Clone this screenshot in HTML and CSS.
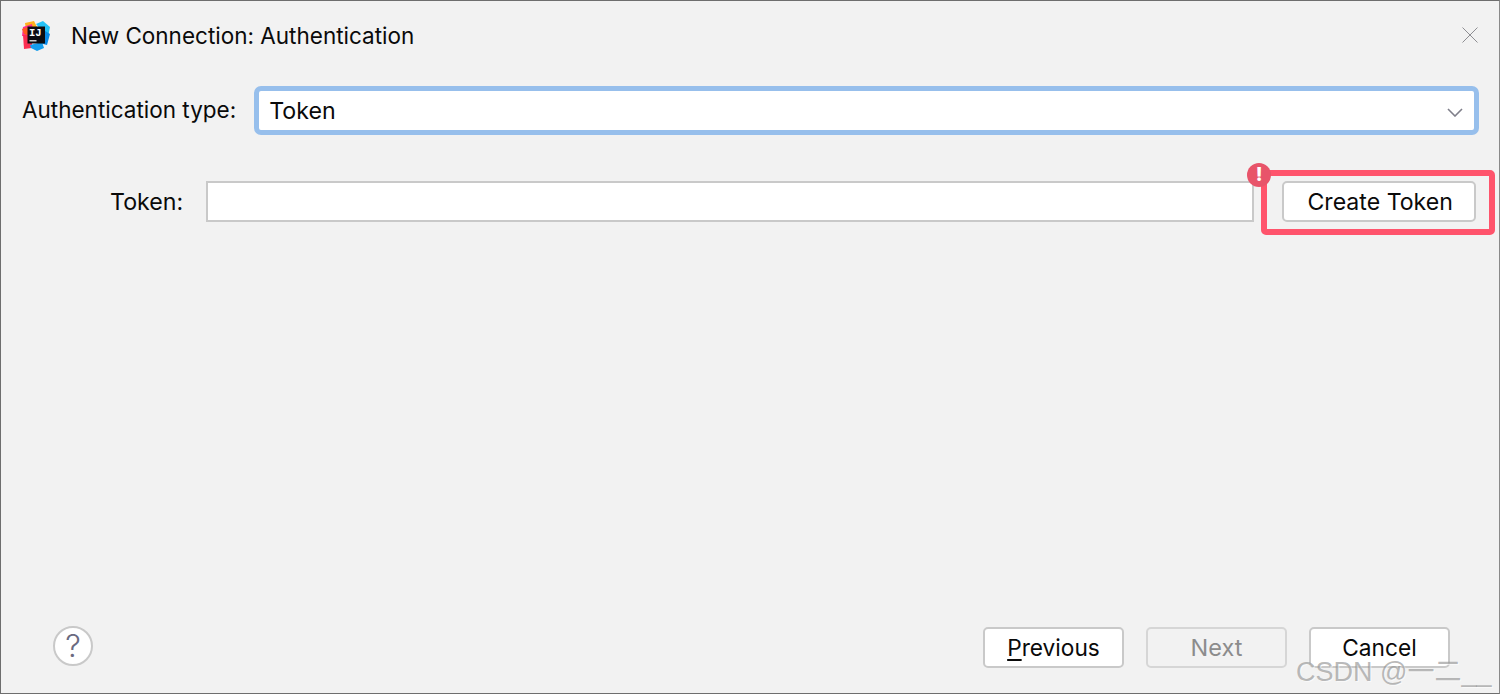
FILE: index.html
```html
<!DOCTYPE html>
<html lang="en">
<head>
<meta charset="utf-8">
<title>New Connection: Authentication</title>
<link rel="stylesheet" href="styles.css">
</head>
<body>
<div class="dialog">
  <header class="titlebar">
    <svg class="logo" viewBox="0 0 28 30" width="28" height="30">
      <polygon points="3,2 12,0 15,6 4,9" fill="#ffb21e"/>
      <polygon points="1,6 10,3 12,16 0,15" fill="#ff2f8e"/>
      <polygon points="0,8 6,6 7,15 2,13" fill="#ff5a1f"/>
      <polygon points="1,14 10,14 10,27 2,28" fill="#fb2e52"/>
      <polygon points="14,3 21,0 28,6 26,16 20,10" fill="#23c2f7"/>
      <polygon points="20,8 28,13 25,24 17,22" fill="#0a8be8"/>
      <polygon points="8,24 20,21 22,27 15,30 9,27" fill="#159dec"/>
      <rect x="5.500" y="5.500" width="17.500" height="17" fill="#0c0c10"/>
      <text x="7" y="14.500" class="logo-text">IJ</text>
      <rect x="7.500" y="19" width="7" height="1.500" fill="#c9c9c9"/>
    </svg>
    <h1 class="title">New Connection: Authentication</h1>
    <svg class="close" viewBox="0 0 16 16" width="16" height="16">
      <path d="M0.500 0.500 15.500 15.500M15.500 0.500 0.500 15.500" stroke="#8e8e92" stroke-width="1" fill="none"/>
    </svg>
  </header>

  <div class="auth-row">
    <label class="label">Authentication type:</label>
    <div class="select">
      <span>Token</span>
      <svg class="chevron" viewBox="0 0 16 9" width="16" height="9">
        <path d="M1 1 8 8 15 1" stroke="#7f7f8a" stroke-width="1.600" fill="none"/>
      </svg>
    </div>
  </div>

  <div class="token-row">
    <label class="label-token">Token:</label>
    <div class="input-wrap">
      <div class="input"></div>
      <span class="badge">!</span>
    </div>
    <div class="highlight-wrap">
      <button class="btn btn-create">Create Token</button>
      <span class="highlight"></span>
    </div>
  </div>

  <footer class="footer">
    <div class="help">?</div>
    <div class="actions">
      <button class="btn"><span class="mnemonic">P</span>revious</button>
      <button class="btn btn-disabled">Next</button>
      <button class="btn">Cancel</button>
    </div>
  </footer>
  <div class="watermark">CSDN @一二__</div>
</div>
</body>
</html>
```
FILE: styles.css
```css
* { box-sizing: border-box; }
html, body { margin: 0; padding: 0; height: 100%; }
body { font-family: Inter, "Noto Sans CJK SC", sans-serif; color: #0a0a0a; background: #f2f2f2; overflow: hidden; }

.dialog {
  position: relative;
  width: 1500px;
  height: 694px;
  display: flex;
  flex-direction: column;
  background: #f2f2f2;
  border: 1px solid #6e6e6e;
  border-right-color: #8a8a8a;
}

.titlebar {
  display: flex;
  align-items: center;
  height: 70px;
  padding: 0 21px;
}
.logo { flex: none; margin-right: 21px; }
.logo-text { font: 700 10.500px "Liberation Mono", monospace; fill: #fff; }
.title { flex: 1; margin: 0 0 2px; font-size: 22.500px; font-weight: 400; }
.close { flex: none; margin-bottom: 2px; }

.label { margin-bottom: 2px; font-size: 22.500px; white-space: nowrap; }
.label-token { font-size: 23.200px; white-space: nowrap; }

.auth-row {
  display: flex;
  align-items: center;
  height: 49px;
  margin-top: 15px;
  padding: 0 20px 0 21px;
  gap: 18px;
}
.select {
  flex: 1;
  height: 49px;
  display: flex;
  align-items: center;
  justify-content: space-between;
  padding: 1px 11px 0 10px;
  font-size: 23.200px;
  background: #fff;
  border: 5px solid #97bfec;
  border-radius: 7px;
}
.chevron { margin-top: 3px; }

.token-row {
  display: flex;
  align-items: center;
  height: 41px;
  margin-top: 46px;
  padding-left: 109px;
  padding-right: 23px;
}
.input-wrap { position: relative; flex: none; margin-left: 23px; margin-right: 28px; }
.input {
  width: 1048px;
  height: 41px;
  background: #fff;
  border: 2px solid #c9c9c9;
}
.badge {
  position: absolute;
  top: -18px;
  right: -17px;
  width: 24px;
  height: 24px;
  border-radius: 50%;
  background: #e8546a;
  color: #fff;
  font-size: 19px;
  font-weight: 800;
  line-height: 24px;
  text-align: center;
  z-index: 2;
}

.btn {
  width: 141px;
  height: 41px;
  padding: 0;
  font-family: inherit;
  font-size: 22.700px;
  color: #0a0a0a;
  background: #fff;
  border: 2px solid #c9c9c9;
  border-radius: 5px;
}
.btn-create { width: 194px; display: block; padding-left: 2px; font-size: 23.100px; }
.btn-disabled { background: #f2f2f2; color: #8c8c8c; border-color: #d6d6d6; font-size: 23.500px; }
.mnemonic { text-decoration: underline; text-underline-offset: 3px; }

.highlight-wrap { position: relative; flex: none; }
.highlight {
  position: absolute;
  top: -11px;
  bottom: -13px;
  left: -21px;
  right: -19px;
  border: 6px solid #ff546c;
  border-radius: 5px;
}

.footer {
  display: flex;
  align-items: flex-start;
  justify-content: space-between;
  margin-top: auto;
  padding: 0 49px 25px 52px;
}
.help {
  width: 40px;
  height: 40px;
  margin-top: -1px;
  border-radius: 50%;
  background: #fff;
  border: 2px solid #c9c9c9;
  color: #6a6a80;
  font-size: 31px;
  line-height: 36px;
  text-align: center;
  font-weight: 300;
}
.actions { display: flex; gap: 22px; }

.watermark {
  position: absolute;
  left: 1295px;
  top: 649px;
  font-family: "Liberation Sans", "Noto Sans CJK SC", sans-serif;
  font-size: 27px;
  color: rgba(140, 140, 140, 0.6);
  text-shadow: 1px 1px 0 rgba(255, 255, 255, 0.6);
  white-space: nowrap;
}
```
